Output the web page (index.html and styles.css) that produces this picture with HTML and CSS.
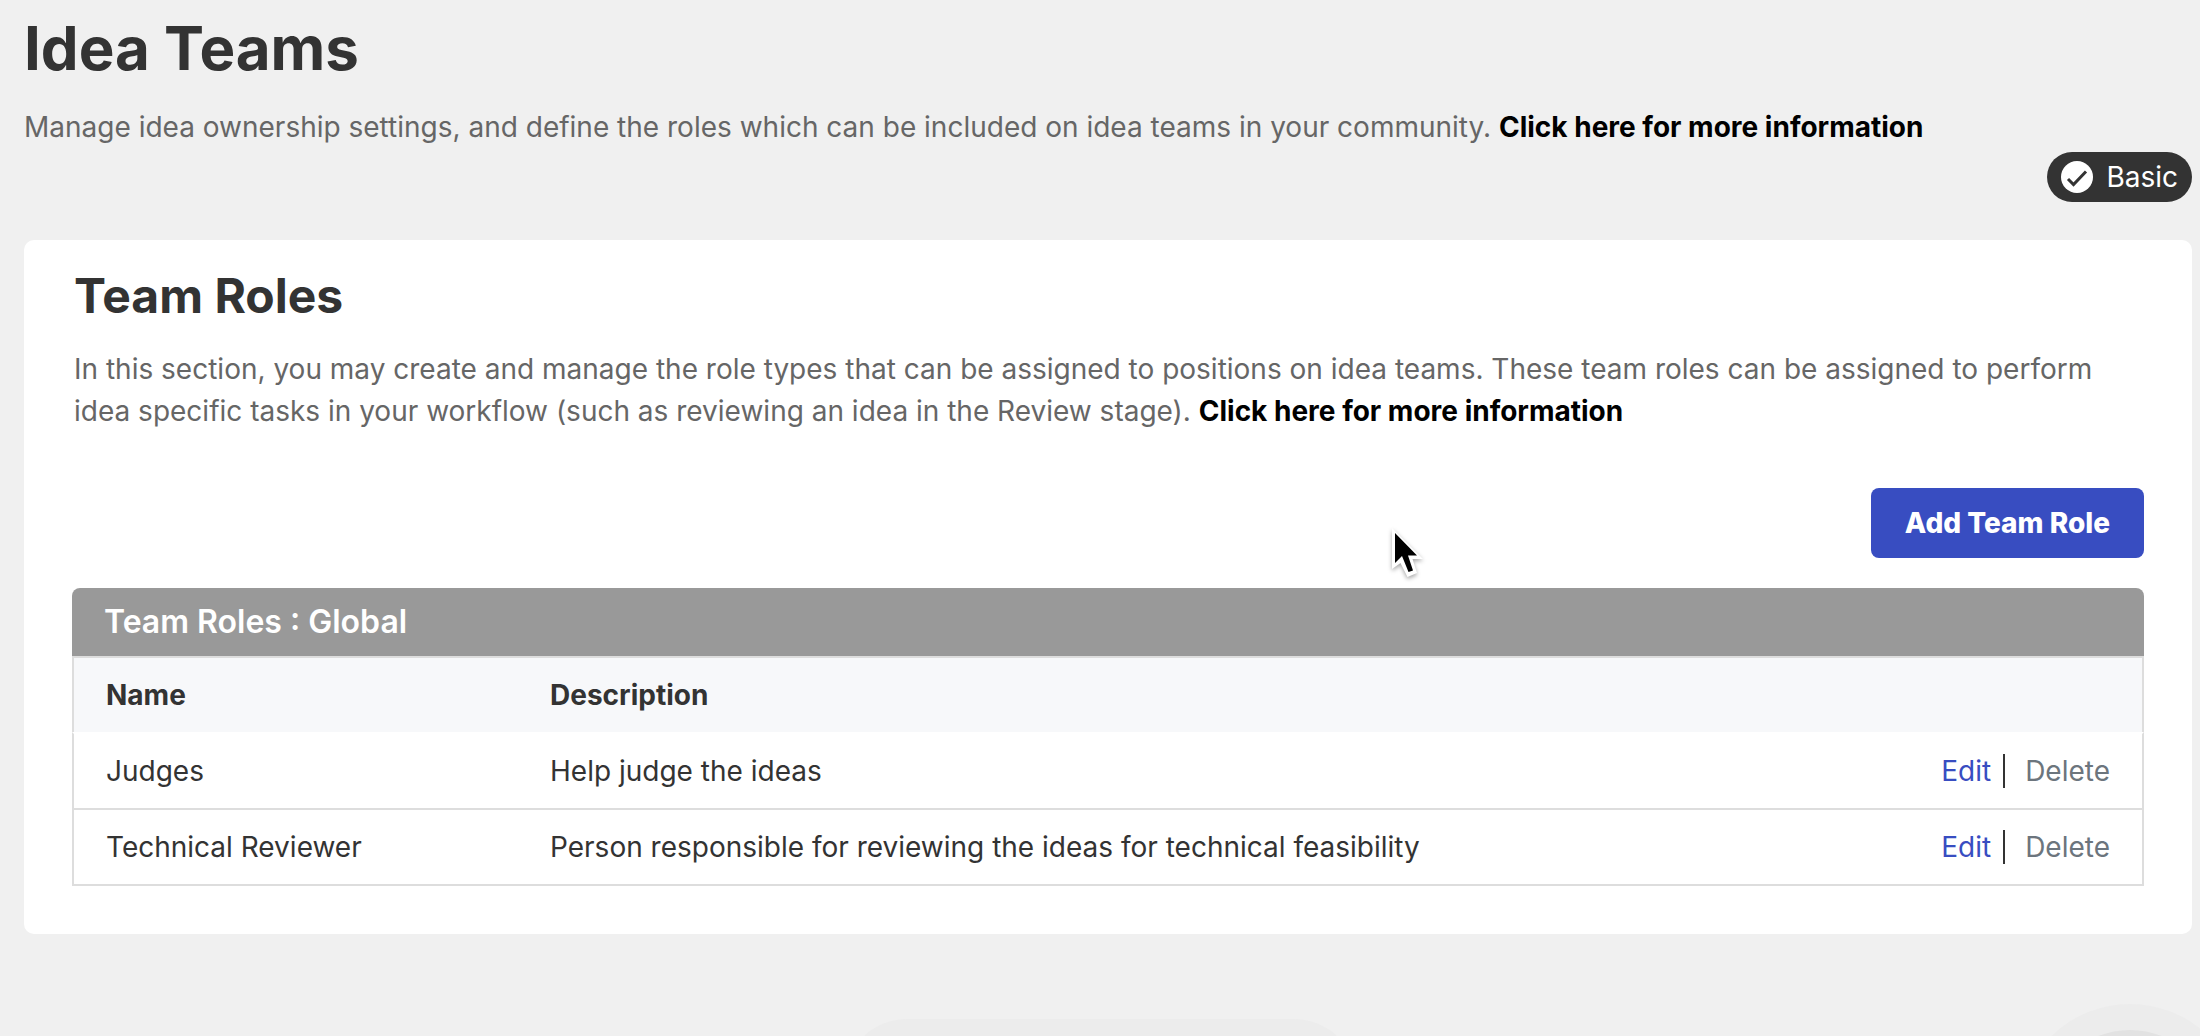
FILE: index.html
```html
<!DOCTYPE html>
<html lang="en">
<head>
    <meta charset="UTF-8">
    <meta name="viewport" content="width=device-width, initial-scale=1.0">
    <title>Idea Teams</title>
    <link rel="stylesheet" href="styles.css">
</head>
<body>
    <header class="page-header">
        <h1>Idea Teams</h1>
        <p>Manage idea ownership settings, and define the roles which can be included on idea teams in your community. <a href="#" class="info-link">Click here for more information</a></p>
        <div class="plan">
            <span class="badge">
                <svg class="badge-icon" viewBox="0 0 32 32" aria-hidden="true">
                    <circle cx="16" cy="16" r="16" fill="#fff"/>
                    <path d="M7 18l5.500 5.500L25 10.500" fill="none" stroke="#333" stroke-width="3"/>
                </svg>
                Basic
            </span>
        </div>
    </header>

    <main class="card">
        <div class="intro">
            <h2>Team Roles</h2>
            <p>In this section, you may create and manage the role types that can be assigned to positions on idea teams. These team roles can be assigned to perform idea specific tasks in your workflow (such as reviewing an idea in the Review stage). <a href="#" class="info-link">Click here for more information</a></p>
        </div>

        <div class="toolbar">
            <button type="button" class="btn">Add Team Role</button>
        </div>

        <table class="roles">
            <caption>Team Roles : Global</caption>
            <thead>
                <tr>
                    <th class="col-name">Name</th>
                    <th>Description</th>
                    <th class="col-actions"></th>
                </tr>
            </thead>
            <tbody>
                <tr>
                    <td>Judges</td>
                    <td>Help judge the ideas</td>
                    <td>
                        <div class="actions">
                            <a href="#" class="edit">Edit</a>
                            <a href="#" class="delete">Delete</a>
                        </div>
                    </td>
                </tr>
                <tr>
                    <td>Technical Reviewer</td>
                    <td>Person responsible for reviewing the ideas for technical feasibility</td>
                    <td>
                        <div class="actions">
                            <a href="#" class="edit">Edit</a>
                            <a href="#" class="delete">Delete</a>
                        </div>
                    </td>
                </tr>
            </tbody>
        </table>
    </main>

    <!-- floating overlays -->
    <svg class="cursor" viewBox="0 0 40 56" aria-hidden="true">
        <path d="M2 1v41l8.500-6 7 14 9.500-4-4.500-14H33z" fill="#fff"/>
        <path d="M5 6v30l7-7 6.500 16 4.500-1.500-5-15h9z" fill="#000"/>
    </svg>
    <div class="dock"></div>
    <div class="bubble"></div>
</body>
</html>
```

FILE: styles.css
```css
* {
    box-sizing: border-box;
}
body {
    margin: 0;
    padding: 16px 8px 0 24px;
    min-height: 100vh;
    background-color: #f0f0f0;
    color: #333;
    font-family: Inter, sans-serif;
    font-size: 28px;
    font-weight: 400;
    line-height: 42px;
}
h1, h2, p {
    margin: 0;
}
h1 {
    font-size: 60px;
    line-height: 64px;
    font-weight: 700;
    margin-bottom: 26px;
}
h2 {
    font-size: 48px;
    line-height: 56px;
    font-weight: 700;
    margin-bottom: 24px;
}
p {
    color: #666;
}
a {
    text-decoration: none;
}
.info-link {
    color: #000;
    font-weight: 700;
}
.plan {
    display: flex;
    justify-content: flex-end;
    margin: 4px 0 38px;
}
.badge {
    display: flex;
    align-items: center;
    gap: 13px;
    height: 50px;
    padding: 0 14px;
    border-radius: 25px;
    background-color: #333;
    color: #fff;
}
.badge-icon {
    width: 32px;
    height: 32px;
}
.card {
    padding: 28px 48px 48px;
    border-radius: 10px;
    background-color: #fff;
}
.intro {
    padding: 0 2px;
}
.toolbar {
    display: flex;
    justify-content: flex-end;
    margin: 56px 0 30px;
}
.btn {
    height: 70px;
    padding: 0 34px;
    border: none;
    border-radius: 8px;
    background-color: #384dc1;
    color: #fff;
    font: 800 28px Inter, sans-serif;
    cursor: pointer;
}
.roles {
    width: 100%;
    border-collapse: separate;
    border-spacing: 0;
}
.roles caption {
    padding: 0 32px;
    border-radius: 8px 8px 0 0;
    background-color: #999;
    color: #fff;
    font-size: 32px;
    line-height: 68px;
    font-weight: 600;
    text-align: left;
}
.roles th, .roles td {
    padding: 16px 32px;
    text-align: left;
}
.roles th {
    border-top: 2px solid #ddd;
    background-color: #f7f8fa;
    font-weight: 700;
}
.roles td {
    border-top: 2px solid #fff;
}
.roles tr:last-child td {
    border-top: 2px solid #ddd;
    border-bottom: 2px solid #ddd;
}
.roles tr th:first-child, .roles tr td:first-child {
    border-left: 2px solid #ddd;
}
.roles tr th:last-child, .roles tr td:last-child {
    border-right: 2px solid #ddd;
}
.col-name {
    width: 446px;
}
.col-actions {
    width: 280px;
}
.actions {
    display: flex;
    justify-content: flex-end;
    align-items: center;
}
.edit {
    color: #384dc1;
}
.delete {
    margin-left: 12px;
    padding-left: 20px;
    border-left: 2px solid #333;
    color: #6c757d;
    line-height: 34px;
}
.cursor {
    position: absolute;
    top: 527px;
    left: 1390px;
    width: 40px;
    height: 56px;
    filter: drop-shadow(0 2px 2px rgba(0,0,0,0.35));
}
.dock {
    position: fixed;
    bottom: -110px;
    left: 844px;
    width: 513px;
    height: 127px;
    border-radius: 63px;
    background-color: #ececec;
}
.bubble {
    position: fixed;
    right: -42px;
    bottom: -192px;
    width: 224px;
    height: 224px;
    border-radius: 112px;
    border: 26px solid #ececec;
    background-color: #e2e2e2;
}
```
